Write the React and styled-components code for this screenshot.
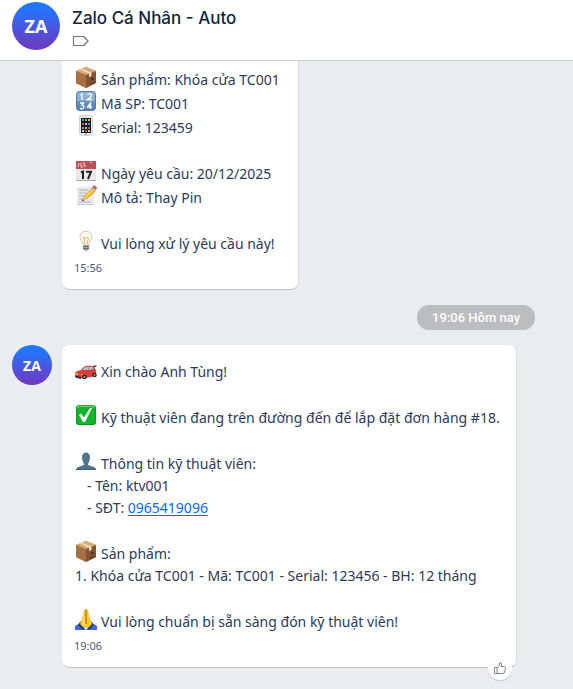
import React from "react";
import styled, { createGlobalStyle } from "styled-components";

const Global = createGlobalStyle`
  * { box-sizing: border-box; }
  body { margin: 0; background: #ebecf0; }
`;

const Page = styled.div`
  display: flex;
  flex-direction: column;
  min-height: 100vh;
  background: #ebecf0;
  color: #2b3a58;
  font-family: "Noto Sans", sans-serif;
`;

const Header = styled.header`
  display: flex;
  align-items: center;
  gap: 12px;
  padding: 2px 12px 10px;
  background: #fff;
  border-bottom: 1px solid #cbcdd2;
`;

const Avatar = styled.div`
  flex: none;
  display: flex;
  align-items: center;
  justify-content: center;
  width: ${(p) => p.$size}px;
  height: ${(p) => p.$size}px;
  border-radius: 50%;
  background: linear-gradient(180deg, #2375fc 15%, #6b3dc6 90%);
  color: #fff;
  font: 700 ${(p) => p.$font}px "Open Sans", sans-serif;
`;

const HeaderText = styled.div`
  display: flex;
  flex-direction: column;
  align-items: flex-start;
  gap: 5px;
`;

const Title = styled.h1`
  margin: 0;
  color: #13243f;
  font: 500 17px/24px "Inter", sans-serif;
`;

const IconButton = styled.button`
  display: flex;
  padding: 0;
  border: 0;
  background: none;
  color: #66758c;
  cursor: pointer;
`;

const Messages = styled.main`
  display: flex;
  flex-direction: column;
  padding: 0 12px 21px;
`;

const MessageRow = styled.div`
  display: flex;
  align-items: flex-start;
  gap: 10px;
`;

const AvatarSlot = styled.div`
  flex: none;
  width: 40px;
`;

const Bubble = styled.article`
  position: relative;
  min-width: ${(p) => (p.$wide ? 455 : 237)}px;
  padding: ${(p) => (p.$continued ? 6 : 14)}px 12px 13px;
  background: #fff;
  border: 0 solid #d9dce3;
  border-width: 0 1px 1px 0;
  border-bottom-color: #bfc3cc;
  border-radius: ${(p) => (p.$continued ? "0 0 8px 8px" : "8px")};
`;

const Lines = styled.div`
  padding-left: 1px;
`;

const Line = styled.p`
  display: flex;
  align-items: flex-end;
  gap: 4px;
  min-height: 22px;
  margin: 0;
  padding-left: ${(p) => (p.$indent ? 12 : 0)}px;
  font-size: 14px;
  line-height: 22px;
`;

const Emoji = styled.svg`
  flex: none;
  width: 22px;
  height: 24px;
  padding-bottom: 2px;
  overflow: visible;
`;

const Phone = styled.a`
  color: #0068ff;
  text-decoration: underline;
  text-underline-offset: 2px;
`;

const Time = styled.time`
  display: block;
  margin-top: 5px;
  color: #4c5a73;
  font-size: 11px;
  line-height: 16px;
`;

const DateChip = styled.div`
  align-self: flex-end;
  margin: 15px 26px;
  padding: 0 15px;
  border-radius: 12px;
  background: #bcbdc1;
  color: #fff;
  font: 500 13px/25px "Roboto", sans-serif;
`;

const Reaction = styled.button`
  position: absolute;
  right: 4px;
  bottom: -13px;
  display: flex;
  align-items: center;
  justify-content: center;
  width: 24px;
  height: 24px;
  padding: 0;
  border: 0;
  border-radius: 50%;
  background: #fff;
  box-shadow: 0 1px 1px rgba(40, 50, 70, 0.2);
  color: #7c8797;
  cursor: pointer;
`;

const drawings = {
  box: (
    <>
      <path d="M1 5 11 1l10 4v12l-10 5-10-5z" fill="#a06a42" />
      <path d="M1 5v12l10 5V9z" fill="#a87145" />
      <path d="M21 5v12l-10 5V9z" fill="#835334" />
      <path d="M1 5 11 1l10 4-10 4z" fill="#d9ab72" />
      <path d="m5 3.500 2-.8 9.500 4V10l-2.500 1V7.400z" fill="#f2ddbd" />
      <path d="M16 14h1v-2h1v2m-3 4 2-1m1 0 2-1" stroke="#3b2418" fill="none" />
    </>
  ),
  numbers: (
    <>
      <defs>
        <linearGradient id="keypad" x2="0" y2="1">
          <stop stopColor="#94b5d8" />
          <stop offset=".48" stopColor="#8badd2" />
          <stop offset=".52" stopColor="#6590bf" />
          <stop offset="1" stopColor="#5480b0" />
        </linearGradient>
      </defs>
      <rect x="1.500" y="1.500" width="19" height="19" rx="3" fill="url(#keypad)" stroke="#517ba7" />
      <g fill="none" stroke="#fff" strokeWidth="1.300">
        <path d="m5.500 5 1.500-1v6M12.500 5c.5-1.500 4-1.500 4 .3 0 1-1 2-4 4.200H17" />
        <path d="M5 13h3.500L7 15c3 0 2 4-.5 4L5 18M15.500 19v-6l-3 4H17" />
      </g>
    </>
  ),
  mobile: (
    <>
      <rect x="4.500" y="1.500" width="13" height="20" rx="2" fill="#e6e9eb" stroke="#cfd4d8" />
      <path d="M6 4h10v15H6z" fill="#191b22" />
      <path d="M7 5h2v2H7zm6 4h2v2h-2z" fill="#3e91e6" />
      <path d="M10 5h2v2h-2zm-3 8h2v2H7z" fill="#69b54a" />
      <path d="M13 5h2v2h-2zm-3 8h2v2h-2z" fill="#e9b53c" />
      <path d="M7 9h2v2H7zm6 4h2v2h-2zm-3 3h2v2h-2z" fill="#d54b3f" />
      <path d="M10 9h2v2h-2zm-3 7h2v2H7zm6 0h2v2h-2z" fill="#b7c8d8" />
      <circle cx="11" cy="20" r="1" fill="#8d969f" />
    </>
  ),
  calendar: (
    <>
      <path d="M1 1h20v20H1z" fill="#e8e8e8" />
      <path d="M1 1h20v8H1z" fill="#bb5258" />
      <path d="m3 7 1-4m2 0v4h2m1-5v4h2m4-4 2 1" fill="none" stroke="#f5d4d4" />
      <path d="m6 12.500 2-1V19M11 11.700h5L13 19" fill="none" stroke="#232529" strokeWidth="2" />
      <path d="M1 20.500h20" stroke="#aaa" />
    </>
  ),
  memo: (
    <>
      <path d="M2 3h17v18H2z" fill="#e8ebee" />
      <path d="M4 6h9M4 9h7M4 12h6M4 15h5M4 18h12" stroke="#a9b1ba" />
      <path d="M2 20.500h17" stroke="#c8cdd2" />
      <path d="m8.500 12.500 8.500-9 4 3.500-9.500 8.500L7 17z" fill="#eda82c" />
      <path d="m9.500 13 8-8.500 1.500 1.200-8 8.500z" fill="#ffd75b" />
      <path d="m8.500 12.500 3 3L7 17z" fill="#e7c5a2" />
      <path d="m7 17.200.8-2.200 1.400 1.400z" fill="#333" />
      <path d="m17 3 1.500-1.300c1-1 4.300 1.800 3.300 3L20.500 6z" fill="#dc594e" />
      <path d="M15.800 4.500 17 3l3.500 3.200-1.300 1.300z" fill="#a9b7be" />
    </>
  ),
  bulb: (
    <>
      <path d="M8 15c0-4-3-5-3-8.500 0-7 12-7 12 0 0 3.500-3 4.500-3 8.500z" fill="#fdf8eb" stroke="#dac9aa" />
      <path d="M10 14 8.500 7l2 1.500L12 7l1.500 1-1.500 6" fill="none" stroke="#e7b65f" />
      <path d="M8 15h6v4l-2 2h-2l-2-2z" fill="#a2a8af" />
      <path d="M8 16.500h6M8 18.500h6" stroke="#646b75" />
    </>
  ),
  car: (
    <>
      <path d="M0 15c1-2 4-2.500 6-3l3-3.300c3-1.200 8-1.200 10-.2l2 4v4.500l-3 1.500-9 2-8.500-1.500z" fill="#d93e37" />
      <path d="m7.500 12 2.500-2.700 4-.6-.5 3.300zm7-3.300 3.500.3.500 2-4.500 1z" fill="#a8c6d3" />
      <path d="m18 8 3.500-.8v1L19 9.500z" fill="#202832" />
      <path d="M0 17.500 6 19v2l-5.500-1.500z" fill="#252a30" />
      <path d="m.5 15 2.500.5L2.500 17 .5 16.500zM6 16h2l-1.500 1.500z" fill="#ffda65" />
      <circle cx="9.500" cy="19" r="2.300" fill="#292b31" />
      <circle cx="19.500" cy="17" r="2.300" fill="#292b31" />
      <circle cx="9.500" cy="19" r=".9" fill="#aaa" />
      <circle cx="19.500" cy="17" r=".9" fill="#aaa" />
    </>
  ),
  check: (
    <>
      <rect x="1" y="1" width="20" height="20" rx="3" fill="#13b52b" />
      <path d="M3 4V2.500h16V4" fill="none" stroke="#8ce293" strokeDasharray="2 1" />
      <path d="M1.500 3v15q0 2.500 3 2.500h13q3 0 3-2.500V3" fill="none" stroke="#099c21" />
      <path d="m4 11 2-1.500 3 4L15 4h2L10 18H8z" fill="#fff" />
    </>
  ),
  person: (
    <>
      <path d="M7 7c0-6 8-6 8 0 0 3-1 5-2 7v1l6 2q2 1 2 3H1q0-2 2-3l6-2v-1C8 12 7 10 7 7z" fill="#527390" />
      <path d="M1 19.500h20" stroke="#405d78" />
    </>
  ),
  hands: (
    <>
      <path d="m0 18 5-3 6 7H0zM22 18l-5-3-6 7h11z" fill="#3f68e3" />
      <path d="m5 14 2-1 4 5-3 4-5-5zm12 0-2-1-4 5 3 4 5-5z" fill="#283e75" />
      <path d="M10.800 1C8 1 9 6 7 10l-2 6 4 4h4l4-4-2-6C13 6 14 1 11.200 1z" fill="#fac935" />
      <path d="M9.500 4Q9 9 8 12l-1 4 2 2 2-2V2z" fill="#ffdf61" />
      <path d="M11 2v14" stroke="#d68a1b" strokeWidth="2" />
    </>
  ),
};

function TextLine({ icon, indent, children }) {
  return (
    <Line $indent={indent}>
      {icon && (
        <Emoji viewBox="0 1 22 22" aria-hidden="true">
          {drawings[icon]}
        </Emoji>
      )}
      <span>{children}</span>
    </Line>
  );
}

export default function App() {
  return (
    <Page>
      <Global />
      <Header>
        <Avatar $size={48} $font={18}>ZA</Avatar>
        <HeaderText>
          <Title>Zalo Cá Nhân - Auto</Title>
          <IconButton type="button" aria-label="Phân loại">
            <svg width="18" height="12" viewBox="0 0 18 12" fill="none" stroke="currentColor" strokeLinejoin="round">
              <path d="M1.500 1.500h10.300L16 6l-4.200 4.500H1.500z" strokeWidth="1.200" />
            </svg>
          </IconButton>
        </HeaderText>
      </Header>
      <Messages>
        <MessageRow>
          <AvatarSlot />
          <Bubble $continued>
            <Lines>
              <TextLine icon="box">Sản phẩm: Khóa cửa TC001</TextLine>
              <TextLine icon="numbers">Mã SP: TC001</TextLine>
              <TextLine icon="mobile">Serial: 123459</TextLine>
              <TextLine />
              <TextLine icon="calendar">Ngày yêu cầu: 20/12/2025</TextLine>
              <TextLine icon="memo">Mô tả: Thay Pin</TextLine>
              <TextLine />
              <TextLine icon="bulb">Vui lòng xử lý yêu cầu này!</TextLine>
            </Lines>
            <Time>15:56</Time>
          </Bubble>
        </MessageRow>
        <DateChip>19:06 Hôm nay</DateChip>
        <MessageRow>
          <AvatarSlot>
            <Avatar $size={40} $font={14}>ZA</Avatar>
          </AvatarSlot>
          <Bubble $wide>
            <Lines>
              <TextLine icon="car">Xin chào Anh Tùng!</TextLine>
              <TextLine />
              <TextLine icon="check">Kỹ thuật viên đang trên đường đến để lắp đặt đơn hàng #18.</TextLine>
              <TextLine />
              <TextLine icon="person">Thông tin kỹ thuật viên:</TextLine>
              <TextLine indent>- Tên: ktv001</TextLine>
              <TextLine indent>
                - SĐT: <Phone href="tel:0965419096">0965419096</Phone>
              </TextLine>
              <TextLine />
              <TextLine icon="box">Sản phẩm:</TextLine>
              <TextLine>1. Khóa cửa TC001 - Mã: TC001 - Serial: 123456 - BH: 12 tháng</TextLine>
              <TextLine />
              <TextLine icon="hands">Vui lòng chuẩn bị sẵn sàng đón kỹ thuật viên!</TextLine>
            </Lines>
            <Time>19:06</Time>
            <Reaction type="button" aria-label="Thích">
              <svg width="14" height="14" viewBox="0 0 14 14" fill="none" stroke="currentColor" strokeLinejoin="round">
                <path d="M1.500 6.500h2.500v6H1.500zM4 7l2.500-3V1.800q1.800-.8 2 1.200L8 5.500h3.500q1.500.2 1 1.700l-1 4q-.3 1.300-1.500 1.300H4" />
              </svg>
            </Reaction>
          </Bubble>
        </MessageRow>
      </Messages>
    </Page>
  );
}
